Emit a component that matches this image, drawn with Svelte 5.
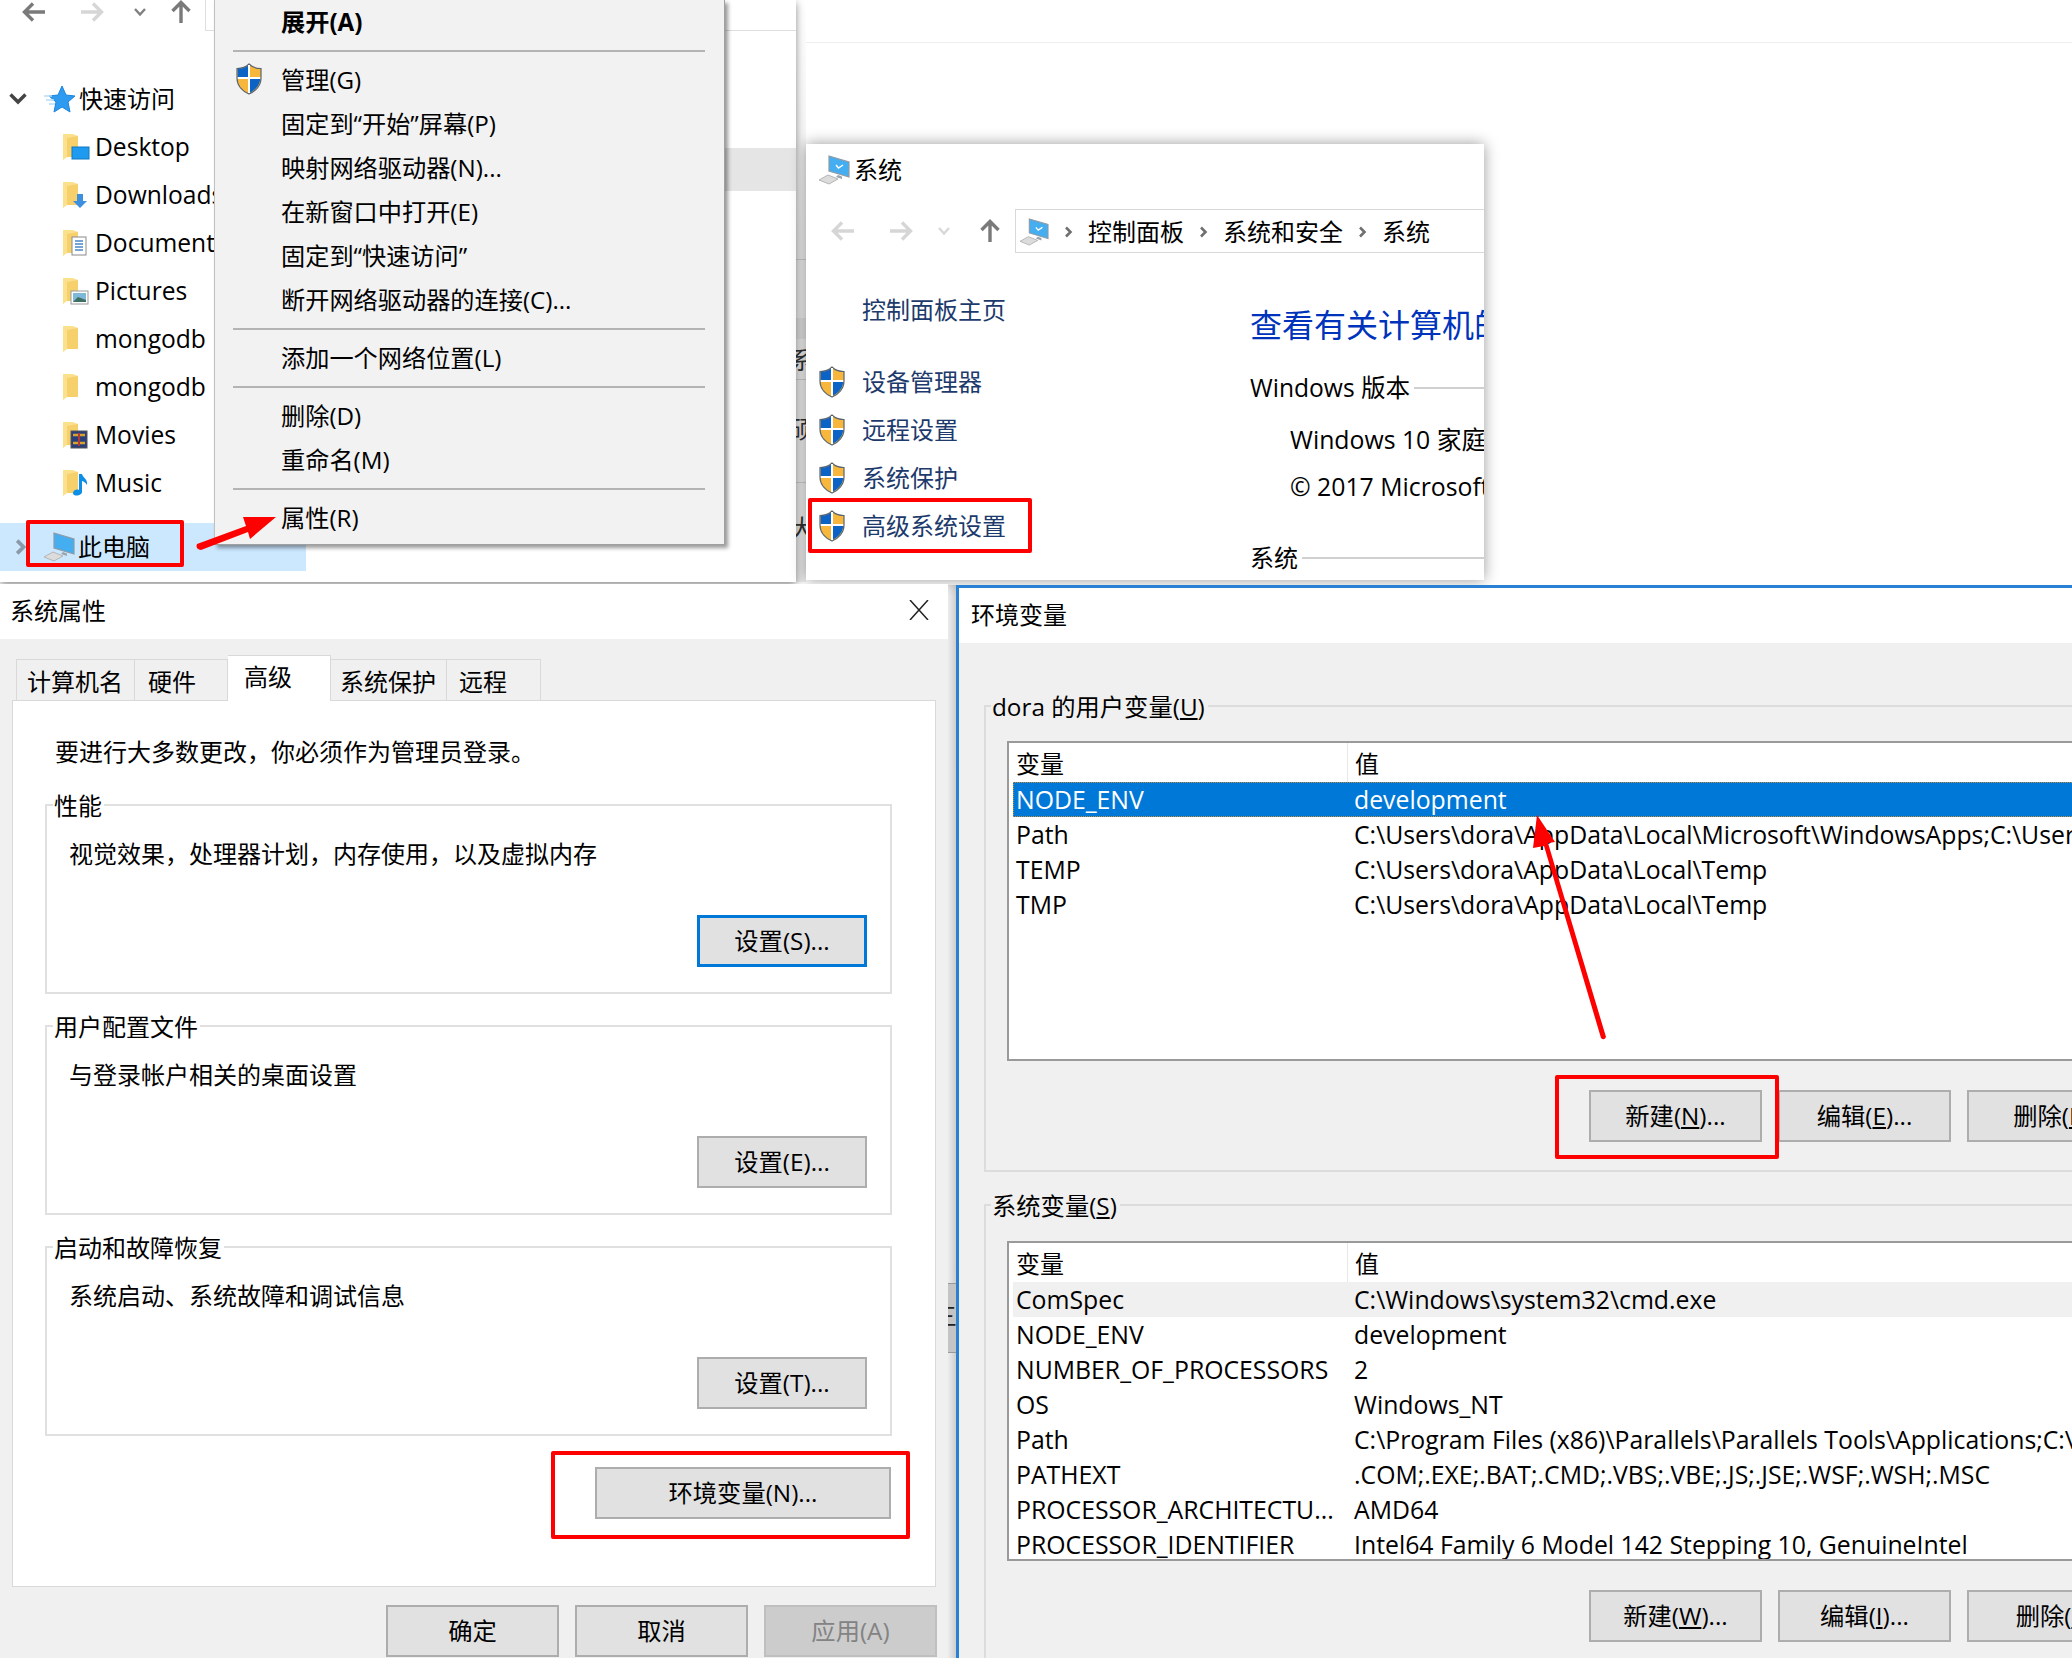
<script>
  const tree = [
    { name: 'Desktop', mark: 'desktop' },
    { name: 'Downloads', mark: 'down' },
    { name: 'Documents', mark: 'doc' },
    { name: 'Pictures', mark: 'pic' },
    { name: 'mongodb', mark: '' },
    { name: 'mongodb', mark: '' },
    { name: 'Movies', mark: 'film' },
    { name: 'Music', mark: 'note' }
  ];
  const tasks = ['设备管理器', '远程设置', '系统保护', '高级系统设置'];
  const groups = [
    { title: '性能', text: '视觉效果，处理器计划，内存使用，以及虚拟内存', btn: '设置(S)...', focus: true },
    { title: '用户配置文件', text: '与登录帐户相关的桌面设置', btn: '设置(E)...' },
    { title: '启动和故障恢复', text: '系统启动、系统故障和调试信息', btn: '设置(T)...' }
  ];
  const userVars = [
    ['NODE_ENV', 'development'],
    ['Path', 'C:\\Users\\dora\\AppData\\Local\\Microsoft\\WindowsApps;C:\\Users\\dora\\AppData'],
    ['TEMP', 'C:\\Users\\dora\\AppData\\Local\\Temp'],
    ['TMP', 'C:\\Users\\dora\\AppData\\Local\\Temp']
  ];
  const sysVars = [
    ['ComSpec', 'C:\\Windows\\system32\\cmd.exe'],
    ['NODE_ENV', 'development'],
    ['NUMBER_OF_PROCESSORS', '2'],
    ['OS', 'Windows_NT'],
    ['Path', 'C:\\Program Files (x86)\\Parallels\\Parallels Tools\\Applications;C:\\Windows'],
    ['PATHEXT', '.COM;.EXE;.BAT;.CMD;.VBS;.VBE;.JS;.JSE;.WSF;.WSH;.MSC'],
    ['PROCESSOR_ARCHITECTU...', 'AMD64'],
    ['PROCESSOR_IDENTIFIER', 'Intel64 Family 6 Model 142 Stepping 10, GenuineIntel']
  ];
</script>

{#snippet shield()}
  <svg class="shield" viewBox="0 0 28 32">
    <path d="M14 1C11 4 6 5.500 2 5.500V15C2 23 8 28.500 14 31C20 28.500 26 23 26 15V5.500C22 5.500 17 4 14 1Z" fill="#f6b73c" stroke="#5a6470" stroke-width="1.200"/>
    <path d="M14 2C11 4.500 6.500 6 2.800 6V15H14Z" fill="#0b63c5"/>
    <path d="M14 15H25.200C25.200 22.500 19.500 27.800 14 30Z" fill="#0b63c5"/>
    <path d="M14 2V30M2.800 15H25.200" stroke="#fff" stroke-width="2"/>
  </svg>
{/snippet}

{#snippet monitor(check)}
  <svg class="monitor" viewBox="0 0 32 30">
    <path d="M1 25L10 20L20 24L11 29Z" fill="#dcdcdc" stroke="#b5b5b5"/>
    <path d="M11 1L31 7V22L11 16Z" fill="#45aef0" stroke="#8f9aa5" stroke-width="1.200"/>
    <path d="M20 20L24 21.500V24L18 22Z" fill="#9aa5ae"/>
    {#if check}<path d="M18 10l2.500 3l4.500-3" fill="none" stroke="#fff" stroke-width="1.400"/>{/if}
  </svg>
{/snippet}

{#snippet arrow(dir, tone)}
  <svg class="arrow {dir} {tone}" viewBox="0 0 24 24"><path d="M23 12H3M11 3.500L2.500 12L11 20.500" fill="none" stroke-width="3.400"/></svg>
{/snippet}

{#snippet chev(tone)}
  <svg class="chev {tone}" viewBox="0 0 14 14"><path d="M5 2.500L9.500 7L5 11.500" fill="none" stroke-width="2.600"/></svg>
{/snippet}

{#snippet folder(mark)}
  <svg class="folder" viewBox="0 0 28 28">
    <path d="M1 1H11L16 3V24H5L1 27Z" fill="#fbe08e"/>
    <path d="M5 5L16 3V24H5Z" fill="#f5d06b"/>
    {#if mark === 'desktop'}
      <rect x="10" y="14" width="17" height="12" fill="#1e9bf0" stroke="#1178c0"/>
    {:else if mark === 'down'}
      <path d="M15 13H21V20H25L18 27L11 20H15Z" fill="#3d8fe0"/>
    {:else if mark === 'doc'}
      <rect x="10" y="8" width="14" height="18" fill="#fff" stroke="#8a8a8a"/>
      <path d="M13 12H21M13 15H21M13 18H21M13 21H21" stroke="#4a86c8" stroke-width="1.300"/>
    {:else if mark === 'pic'}
      <rect x="9" y="14" width="17" height="13" fill="#fff" stroke="#999"/>
      <rect x="11" y="16" width="13" height="9" fill="#7fb8d8"/>
      <path d="M11 25L16 20L24 23V25Z" fill="#3f6f62"/>
    {:else if mark === 'film'}
      <rect x="9" y="10" width="16" height="17" fill="#2a3f7a" stroke="#555"/>
      <path d="M11 14H23M11 22H23" stroke="#d8a22c" stroke-width="2.500"/>
      <path d="M17 12V25" stroke="#b03a3a" stroke-width="2"/>
    {:else if mark === 'note'}
      <path d="M17 5H20C21 9 26 10 25 16C23 13 21 12 20 12V23C20 27 11 28 11 24C11 20 17 20 17 21Z" fill="#0d8fe6"/>
    {/if}
  </svg>
{/snippet}

<main class="canvas">
  <div class="back-rule"></div>

  <div class="peek-a">
    <i class="peek-line la"></i>
    <i class="peek-line lb"></i>
    <i class="peek-line lc"></i>
    <i class="peek-line ld"></i>
    <span class="peek-text ta">系</span>
    <span class="peek-text tb">硕</span>
    <span class="peek-text tc">大</span>
  </div>
  <div class="peek-b"><div class="peek-band">三</div></div>

  <section class="explorer">
    <div class="toolbar">
      {@render arrow('left', 'mid')}
      {@render arrow('right', 'pale')}
      <svg class="chev-down" viewBox="0 0 14 10"><path d="M2 2L7 7.500L12 2" fill="none" stroke="#808080" stroke-width="2.400"/></svg>
      {@render arrow('up', 'mid')}
      <div class="addr-box"></div>
    </div>
    <div class="selected-band"></div>
    <ul class="tree">
      <li class="quick">
        <svg class="chev-open" viewBox="0 0 20 14"><path d="M2.500 2.500L10 10L17.500 2.500" fill="none" stroke="#444" stroke-width="3.400"/></svg>
        <svg class="star" viewBox="0 0 32 28"><path d="M18 1L22 10L31 11L24 17L26 27L18 22L10 27L12 17L5 11L14 10Z" fill="#2f9bf0" stroke="#1c86dc"/><path d="M0 11H8M2 15H10M5 19H11" stroke="#b6dcf8" stroke-width="1.300"/></svg>
        快速访问
      </li>
      {#each tree as item}
        <li class="leaf">{@render folder(item.mark)}{item.name}</li>
      {/each}
      <li class="pc">
        {@render chev('gray')}
        {@render monitor(false)}
        此电脑
        <span class="mark pc-mark"></span>
      </li>
    </ul>

    <div class="menu">
      <div class="item bold">展开(A)</div>
      <hr />
      <div class="item">{@render shield()}管理(G)</div>
      <div class="item">固定到“开始”屏幕(P)</div>
      <div class="item">映射网络驱动器(N)...</div>
      <div class="item">在新窗口中打开(E)</div>
      <div class="item">固定到“快速访问”</div>
      <div class="item">断开网络驱动器的连接(C)...</div>
      <hr />
      <div class="item">添加一个网络位置(L)</div>
      <hr />
      <div class="item">删除(D)</div>
      <div class="item">重命名(M)</div>
      <hr />
      <div class="item">属性(R)</div>
    </div>
  </section>

  <section class="system">
    <div class="sys-title">{@render monitor(true)}系统</div>
    <div class="sys-nav">
      {@render arrow('left', 'pale')}
      {@render arrow('right', 'pale')}
      <svg class="chev-down small" viewBox="0 0 14 10"><path d="M2 2L7 7.500L12 2" fill="none" stroke="#d8d8d8" stroke-width="2.400"/></svg>
      {@render arrow('up', 'mid')}
      <div class="crumbs">
        {@render monitor(true)}
        {@render chev('dark')}<span>控制面板</span>
        {@render chev('dark')}<span>系统和安全</span>
        {@render chev('dark')}<span>系统</span>
      </div>
    </div>
    <div class="sys-body">
      <div class="sys-left">
        <div class="home">控制面板主页</div>
        {#each tasks as task}
          <div class="task">{@render shield()}{task}</div>
        {/each}
        <span class="mark task-mark"></span>
      </div>
      <div class="sys-right">
        <h1>查看有关计算机的基本信息</h1>
        <div class="rule-head ver">Windows 版本<i></i></div>
        <div class="info ed">Windows 10 家庭中文版</div>
        <div class="info copy">© 2017 Microsoft Corporation。保留所有权利。</div>
        <div class="rule-head sysh">系统<i></i></div>
      </div>
    </div>
  </section>

  <section class="props">
    <header class="dlg-title">系统属性
      <svg class="close" viewBox="0 0 20 20"><path d="M1 0L19 20M19 0L1 20" stroke="#222" stroke-width="1.500"/></svg>
    </header>
    <div class="tabs">
      <div class="tab w1">计算机名</div>
      <div class="tab w2">硬件</div>
      <div class="tab w3 active">高级</div>
      <div class="tab w4">系统保护</div>
      <div class="tab w5">远程</div>
    </div>
    <div class="panel">
      <p class="intro">要进行大多数更改，你必须作为管理员登录。</p>
      {#each groups as g}
        <div class="gbox">
          <span class="glabel">{g.title}</span>
          <p>{g.text}</p>
          <button class="btn set" class:focus={g.focus}>{g.btn}</button>
        </div>
      {/each}
      <div class="env-row">
        <button class="btn envbtn">环境变量(N)...</button>
        <span class="mark env-mark"></span>
      </div>
    </div>
    <div class="footer">
      <button class="btn foot">确定</button>
      <button class="btn foot">取消</button>
      <button class="btn foot off">应用(A)</button>
    </div>
  </section>

  <section class="envvars">
    <header class="dlg-title env-title">环境变量</header>
    <div class="env-body">
      <div class="vgroup first">
        <span class="vlabel">dora 的用户变量(<u>U</u>)</span>
        <div class="vlist">
          <div class="vhead"><span>变量</span><span class="col2">值</span></div>
          {#each userVars as row, i}
            <div class="vrow" class:sel={i === 0}><span>{row[0]}</span><span class="col2">{row[1]}</span></div>
          {/each}
        </div>
        <div class="vbtns">
          <button class="btn vb">新建(<u>N</u>)...</button>
          <button class="btn vb">编辑(<u>E</u>)...</button>
          <button class="btn vb">删除(<u>D</u>)</button>
          <span class="mark new-mark"></span>
        </div>
      </div>
      <div class="vgroup second">
        <span class="vlabel">系统变量(<u>S</u>)</span>
        <div class="vlist">
          <div class="vhead"><span>变量</span><span class="col2">值</span></div>
          {#each sysVars as row, i}
            <div class="vrow" class:soft={i === 0}><span>{row[0]}</span><span class="col2">{row[1]}</span></div>
          {/each}
        </div>
        <div class="vbtns">
          <button class="btn vb">新建(<u>W</u>)...</button>
          <button class="btn vb">编辑(<u>I</u>)...</button>
          <button class="btn vb">删除(<u>L</u>)</button>
        </div>
      </div>
    </div>
  </section>

  <!-- hand drawn red arrows that sit on top of everything -->
  <svg class="notes" viewBox="0 0 2072 1658">
    <path d="M197 544L246 526L243 517L276 517L250 539L248 532L201 550Q195 549 197 544Z" fill="#f00"/>
    <path d="M1537 815L1555 842L1548 843L1606 1037Q1604 1041 1601 1038L1544 846L1533 848Z" fill="#f00"/>
  </svg>
</main>

<style>
  :global(body) {
    margin: 0;
    background: #fff;
  }
  .canvas {
    position: relative;
    width: 2072px;
    height: 1658px;
    overflow: hidden;
    background: #fff;
    color: #000;
    font: 24px/32px "Open Sans", "Noto Sans CJK SC", sans-serif;
  }
  .canvas * {
    box-sizing: border-box;
  }
  p, h1, ul {
    margin: 0;
    padding: 0;
  }
  li {
    list-style: none;
  }

  .back-rule {
    position: absolute;
    left: 796px;
    right: 0;
    top: 42px;
    height: 1px;
    background: #eee;
  }
  .peek-a {
    position: absolute;
    left: 796px;
    top: 0;
    width: 10px;
    height: 582px;
    overflow: hidden;
    background: linear-gradient(to bottom, #fff 0, #f6f6f6 120px, #eee 240px, #eee 100%);
  }
  .peek-line {
    position: absolute;
    left: 0;
    right: 0;
    height: 1px;
    background: #cfcfcf;
  }
  .la { top: 259px; }
  .lb { top: 318px; height: 21px; background: #e0e0e0; }
  .lc { top: 379px; }
  .ld { top: 482px; }
  .peek-text {
    position: absolute;
    right: -8px;
    color: #333;
  }
  .ta { top: 344px; }
  .tb { top: 413px; }
  .tc { top: 512px; }
  .peek-b {
    position: absolute;
    left: 948px;
    top: 585px;
    width: 9px;
    height: 1073px;
    padding-top: 698px;
    overflow: hidden;
    background: linear-gradient(to right, #ececec, #cacaca);
  }
  .peek-band {
    height: 70px;
    padding-top: 16px;
    background: #c4c4c4;
    border-top: 1px solid #999;
    border-bottom: 1px solid #999;
    color: #222;
    white-space: nowrap;
    direction: rtl;
  }

  /* explorer */
  .explorer {
    position: absolute;
    left: 0;
    top: 0;
    width: 796px;
    height: 582px;
    background: #fff;
    box-shadow: 0 3px 8px rgba(0, 0, 0, 0.45);
  }
  .toolbar {
    display: flex;
    align-items: center;
    height: 24px;
    padding-left: 22px;
  }
  .arrow {
    width: 24px;
    height: 24px;
    flex: none;
  }
  .arrow.right { transform: rotate(180deg); margin-left: 34px; }
  .arrow.up { transform: rotate(90deg); }
  .arrow.mid path { stroke: #7a7a7a; }
  .arrow.pale path { stroke: #d6d6d6; }
  .chev-down {
    width: 14px;
    height: 10px;
    margin-left: 29px;
    flex: none;
  }
  .toolbar .arrow.up { margin-left: 22px; }
  .addr-box {
    position: absolute;
    left: 205px;
    right: 0;
    top: -1px;
    height: 32px;
    border: 1px solid #dedede;
    border-right: 0;
  }
  .selected-band {
    position: absolute;
    left: 700px;
    right: 0;
    top: 148px;
    height: 43px;
    background: #e5e5e5;
  }
  .tree {
    position: absolute;
    left: 0;
    top: 75px;
    width: 306px;
  }
  .tree li {
    position: relative;
    display: flex;
    align-items: center;
    height: 48px;
    white-space: nowrap;
  }
  .quick {
    padding-left: 8px;
  }
  .chev-open {
    width: 20px;
    height: 14px;
    margin-right: 16px;
  }
  .star {
    width: 32px;
    height: 28px;
    margin-right: 3px;
  }
  .leaf {
    padding-left: 62px;
    font-size: 24.600px;
  }
  .folder {
    width: 28px;
    height: 28px;
    margin-right: 5px;
    flex: none;
  }
  .tree .pc {
    margin-top: 16px;
    padding-left: 10px;
    background: #cce8ff;
  }
  .chev {
    width: 20px;
    height: 24px;
    flex: none;
  }
  .chev.gray path { stroke: #8a9aa8; }
  .chev.dark path { stroke: #707070; }
  .monitor {
    width: 32px;
    height: 30px;
    flex: none;
  }
  .pc .monitor {
    margin: 0 3px 0 13px;
  }
  .mark {
    position: absolute;
    border: 4px solid #f00;
    border-radius: 2px;
  }
  .pc-mark {
    left: 26px;
    top: -3px;
    width: 158px;
    height: 47px;
  }

  .menu {
    position: absolute;
    left: 214px;
    top: 0;
    width: 511px;
    height: 545px;
    background: #f2f2f2;
    border-right: 1px solid #a0a0a0;
    border-bottom: 1px solid #a0a0a0;
    border-left: 1px solid #c0c0c0;
    box-shadow: 3px 3px 4px rgba(0, 0, 0, 0.4);
  }
  .item {
    position: relative;
    display: flex;
    align-items: center;
    height: 44px;
    padding-left: 66px;
    font-size: 24.200px;
  }
  .bold {
    font-weight: 700;
  }
  .menu hr {
    height: 2px;
    margin: 6px 19px 6px 18px;
    border: 0;
    background: #b4b4b4;
  }
  .shield {
    width: 28px;
    height: 32px;
    flex: none;
  }
  .item .shield {
    position: absolute;
    left: 20px;
    top: 5px;
  }

  /* control panel window */
  .system {
    position: absolute;
    left: 806px;
    top: 144px;
    width: 678px;
    height: 436px;
    overflow: hidden;
    background: #fff;
    box-shadow: 0 0 14px rgba(0, 0, 0, 0.4);
  }
  .sys-title {
    display: flex;
    align-items: center;
    gap: 4px;
    height: 50px;
    padding: 1px 0 0 12px;
  }
  .sys-nav {
    display: flex;
    align-items: center;
    height: 44px;
    margin-top: 15px;
    padding-left: 25px;
  }
  .sys-nav .arrow.right { margin-left: 34px; }
  .sys-nav .arrow.up { margin-left: 27px; }
  .small { margin-left: 24px; }
  .crumbs {
    display: flex;
    align-items: center;
    flex: 1;
    height: 44px;
    margin-left: 13px;
    padding: 2px 0 0 3px;
    border: 1px solid #d9d9d9;
    border-right: 0;
    white-space: nowrap;
  }
  .crumbs .monitor {
    width: 30px;
    height: 28px;
  }
  .crumbs .chev {
    margin: 0 13px 0 12px;
    width: 14px;
  }
  .sys-body {
    display: grid;
    grid-template-columns: 444px 1fr;
  }
  .sys-left {
    position: relative;
    padding: 33px 0 0 12px;
    color: #1d3a6c;
  }
  .home {
    height: 48px;
    line-height: 48px;
    margin: 0 0 24px 44px;
  }
  .task {
    display: flex;
    align-items: center;
    gap: 16px;
    height: 48px;
  }
  .task-mark {
    left: 2px;
    top: 245px;
    width: 224px;
    height: 55px;
  }
  .sys-right {
    white-space: nowrap;
  }
  .sys-right h1 {
    margin-top: 52px;
    font-size: 32px;
    line-height: 40px;
    font-weight: 400;
    color: #0033bc;
  }
  .rule-head {
    display: flex;
    align-items: center;
    gap: 4px;
    font-size: 24.600px;
  }
  .rule-head i {
    flex: 1;
    height: 2px;
    background: #d0d0d0;
  }
  .ver { margin-top: 27px; }
  .info {
    padding-left: 40px;
    font-size: 24.800px;
  }
  .ed { margin-top: 19px; }
  .copy { margin-top: 15px; }
  .sysh { margin-top: 40px; font-size: 24px; }

  /* system properties dialog */
  .props {
    position: absolute;
    left: 0;
    top: 584px;
    width: 948px;
    height: 1074px;
    background: #f0f0f0;
  }
  .dlg-title {
    position: relative;
    height: 55px;
    line-height: 54px;
    padding-left: 10px;
    background: #fff;
  }
  .close {
    position: absolute;
    left: 909px;
    top: 16px;
    width: 20px;
    height: 20px;
  }
  .tabs {
    display: flex;
    align-items: flex-end;
    height: 45px;
    margin: 16px 0 0 16px;
  }
  .tab {
    height: 41px;
    line-height: 43px;
    padding-left: 11px;
    background: #f0f0f0;
    border: 1px solid #d9d9d9;
    border-bottom: 0;
    border-left: 0;
    white-space: nowrap;
  }
  .w1 { width: 119px; padding-left: 10px; border-left: 1px solid #d9d9d9; }
  .w2 { width: 93px; padding-left: 13px; }
  .w3 { width: 103px; padding-left: 16px; }
  .w4 { width: 116px; padding-left: 9px; }
  .w5 { width: 94px; padding-left: 12px; }
  .tab.active {
    position: relative;
    z-index: 1;
    height: 46px;
    line-height: 42px;
    margin-bottom: -1px;
    background: #fff;
  }
  .panel {
    height: 887px;
    margin: 0 12px 0 12px;
    padding: 35px 0 0 32px;
    background: #fff;
    border: 1px solid #d9d9d9;
  }
  .intro {
    margin: 0 0 36px 10px;
  }
  .gbox {
    position: relative;
    display: flex;
    flex-direction: column;
    width: 847px;
    height: 190px;
    margin-bottom: 31px;
    padding: 32px 23px 25px 22px;
    border: 2px solid #e0e0e0;
  }
  .glabel {
    position: absolute;
    left: 6px;
    top: -16px;
    padding: 0 2px 0 1px;
    background: #fff;
  }
  .btn {
    height: 52px;
    padding: 0;
    background: #e1e1e1;
    border: 2px solid #adadad;
    color: #000;
    font: inherit;
    font-size: 24.300px;
    white-space: nowrap;
  }
  .set {
    align-self: flex-end;
    width: 170px;
    margin-top: auto;
  }
  .set.focus {
    border: 3px solid #0078d7;
  }
  .env-row {
    position: relative;
    display: flex;
    width: 847px;
    justify-content: flex-end;
    margin-top: 31px;
  }
  .envbtn {
    width: 296px;
    margin-right: 1px;
  }
  .env-mark {
    left: 506px;
    top: -16px;
    width: 359px;
    height: 88px;
  }
  .footer {
    display: flex;
    justify-content: flex-end;
    gap: 16px;
    margin-top: 18px;
    padding-right: 11px;
  }
  .foot {
    width: 173px;
  }
  .foot.off {
    background: #ccc;
    border-color: #bfbfbf;
    color: #838383;
  }

  /* environment variables dialog */
  .envvars {
    position: absolute;
    left: 956px;
    top: 585px;
    width: 1116px;
    height: 1073px;
    overflow: hidden;
    background: #f0f0f0;
    border-left: 3px solid #2a80d2;
    border-top: 3px solid #2a80d2;
  }
  .env-title {
    padding-left: 12px;
  }
  .env-body {
    padding: 62px 0 0 25px;
  }
  .vgroup {
    position: relative;
    width: 1200px;
    padding: 34px 0 0 21px;
    border: 2px solid #dcdcdc;
  }
  .first {
    height: 467px;
    margin-bottom: 32px;
  }
  .second {
    height: 500px;
    padding-top: 35px;
    border-bottom: 0;
  }
  .vlabel {
    position: absolute;
    left: 5px;
    top: -16px;
    padding: 0 3px 0 1px;
    background: #f0f0f0;
    font-size: 24.300px;
  }
  .vlist {
    height: 320px;
    padding-left: 4px;
    overflow: hidden;
    background: #fff;
    border: 2px solid #9a9a9a;
    border-right: 0;
  }
  .vhead, .vrow {
    display: grid;
    grid-template-columns: 334px 1fr;
    white-space: nowrap;
    overflow: hidden;
  }
  .vhead {
    height: 39px;
    line-height: 42px;
  }
  .vhead span {
    padding-left: 3px;
  }
  .vhead .col2 {
    padding-left: 7px;
    border-left: 1px solid #e8e8e8;
  }
  .vrow {
    height: 35px;
    line-height: 35px;
    font-size: 24.800px;
  }
  .vrow span {
    padding-left: 3px;
  }
  .vrow .col2 {
    padding-left: 7px;
  }
  .vrow.sel {
    background: #0078d7;
    color: #fff;
    outline: 1px dotted #c98a3c;
    outline-offset: -1px;
  }
  .vrow.soft {
    background: #f0f0f0;
  }
  .vbtns {
    position: relative;
    display: flex;
    gap: 16px;
    margin-top: 29px;
    padding-left: 582px;
  }
  .vb {
    width: 173px;
  }
  .new-mark {
    left: 548px;
    top: -15px;
    width: 224px;
    height: 84px;
  }
  .notes {
    position: absolute;
    left: 0;
    top: 0;
    width: 2072px;
    height: 1658px;
    pointer-events: none;
  }
</style>
